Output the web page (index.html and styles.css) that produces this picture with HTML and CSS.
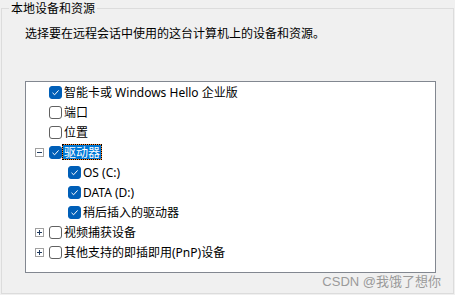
FILE: index.html
```html
<!DOCTYPE html>
<html lang="zh-CN">
<head>
    <meta charset="UTF-8">
    <title>本地设备和资源</title>
    <link rel="stylesheet" href="styles.css">
</head>
<body>
    <fieldset class="group">
        <legend>本地设备和资源</legend>
        <p class="hint">选择要在远程会话中使用的这台计算机上的设备和资源。</p>

        <div class="tree">
            <div class="row">
                <span class="expander"></span>
                <span class="check on"><svg viewBox="0 0 13 13"><path d="M3.5 6.8 L5.6 8.8 L9.6 4.4"/></svg></span>
                <span class="label">智能卡或 Windows Hello 企业版</span>
            </div>
            <div class="row">
                <span class="expander"></span>
                <span class="check"></span>
                <span class="label">端口</span>
            </div>
            <div class="row">
                <span class="expander"></span>
                <span class="check"></span>
                <span class="label">位置</span>
            </div>
            <div class="row">
                <span class="expander"><svg viewBox="0 0 9 9"><path d="M2 4.5 H7"/></svg></span>
                <span class="check on"><svg viewBox="0 0 13 13"><path d="M3.5 6.8 L5.6 8.8 L9.6 4.4"/></svg></span>
                <span class="label selected">驱动器</span>
            </div>
            <div class="row child">
                <span class="expander empty"></span>
                <span class="check on"><svg viewBox="0 0 13 13"><path d="M3.5 6.8 L5.6 8.8 L9.6 4.4"/></svg></span>
                <span class="label">OS (C:)</span>
            </div>
            <div class="row child">
                <span class="expander empty"></span>
                <span class="check on"><svg viewBox="0 0 13 13"><path d="M3.5 6.8 L5.6 8.8 L9.6 4.4"/></svg></span>
                <span class="label">DATA (D:)</span>
            </div>
            <div class="row child">
                <span class="expander empty"></span>
                <span class="check on"><svg viewBox="0 0 13 13"><path d="M3.5 6.8 L5.6 8.8 L9.6 4.4"/></svg></span>
                <span class="label">稍后插入的驱动器</span>
            </div>
            <div class="row">
                <span class="expander"><svg viewBox="0 0 9 9"><path d="M2 4.5 H7 M4.5 2 V7"/></svg></span>
                <span class="check"></span>
                <span class="label">视频捕获设备</span>
            </div>
            <div class="row">
                <span class="expander"><svg viewBox="0 0 9 9"><path d="M2 4.5 H7 M4.5 2 V7"/></svg></span>
                <span class="check"></span>
                <span class="label">其他支持的即插即用(PnP)设备</span>
            </div>
        </div>

        <div class="mark">CSDN @我饿了想你</div>
    </fieldset>
</body>
</html>
```

FILE: styles.css
```css
* {
    box-sizing: border-box;
}

body {
    margin: 0;
    background-color: #f0f0f0;
    font-family: "Noto Sans", "Noto Sans CJK SC", sans-serif;
    font-size: 12px;
    color: #000;
}

/* Group box */
.group {
    margin: 0 0 0 1px;
    width: 453px;
    height: 294px;
    padding: 0 12px 0 1px;
    border: 1px solid #dcdcdc;
}

.group legend {
    margin-left: 6px;
    padding: 1px 2px 0;
    line-height: 15px;
}

.hint {
    margin: 9px 0 0 22px;
    padding-top: 1px;
    line-height: 15px;
}

/* Tree list */
.tree {
    margin: 40px 0 0 22px;
    width: 411px;
    height: 192px;
    background-color: #fff;
    border: 1px solid #828790;
}

.row {
    display: flex;
    align-items: center;
    height: 20px;
    padding-left: 9px;
}

.row.child {
    padding-left: 28px;
}

.expander {
    width: 9px;
    height: 9px;
    margin-right: 5px;
    border: 1px solid #a0a0a0;
    background-color: #fff;
    visibility: hidden;
}

.expander svg {
    display: block;
    width: 9px;
    height: 9px;
    margin: -1px;
}

.expander svg path {
    stroke: #1f3a5f;
    stroke-width: 1;
    fill: none;
}

.row:nth-child(4) .expander,
.row:nth-child(8) .expander,
.row:nth-child(9) .expander {
    visibility: visible;
}

.check {
    width: 13px;
    height: 13px;
    border: 1px solid #616161;
    border-radius: 3px;
    background-color: #fff;
}

.check.on {
    border-color: #005fb8;
    background-color: #005fb8;
}

.check svg {
    display: block;
    width: 13px;
    height: 13px;
    margin: -1px;
}

.check svg path {
    stroke: #fff;
    stroke-width: 1;
    fill: none;
}

.label {
    padding: 1px 2px 0;
    line-height: 15px;
    white-space: nowrap;
}

.label.selected {
    color: #fff;
    background-color: #0078d7;
    box-shadow: inset 0 0 0 1px #ff8728;
    outline: 1px dotted #000;
    outline-offset: -1px;
}

.mark {
    margin-top: 1px;
    text-align: right;
    font-family: "Liberation Sans", "Noto Sans CJK SC", sans-serif;
    font-size: 13px;
    line-height: 16px;
    color: #9a9a9a;
}
```
